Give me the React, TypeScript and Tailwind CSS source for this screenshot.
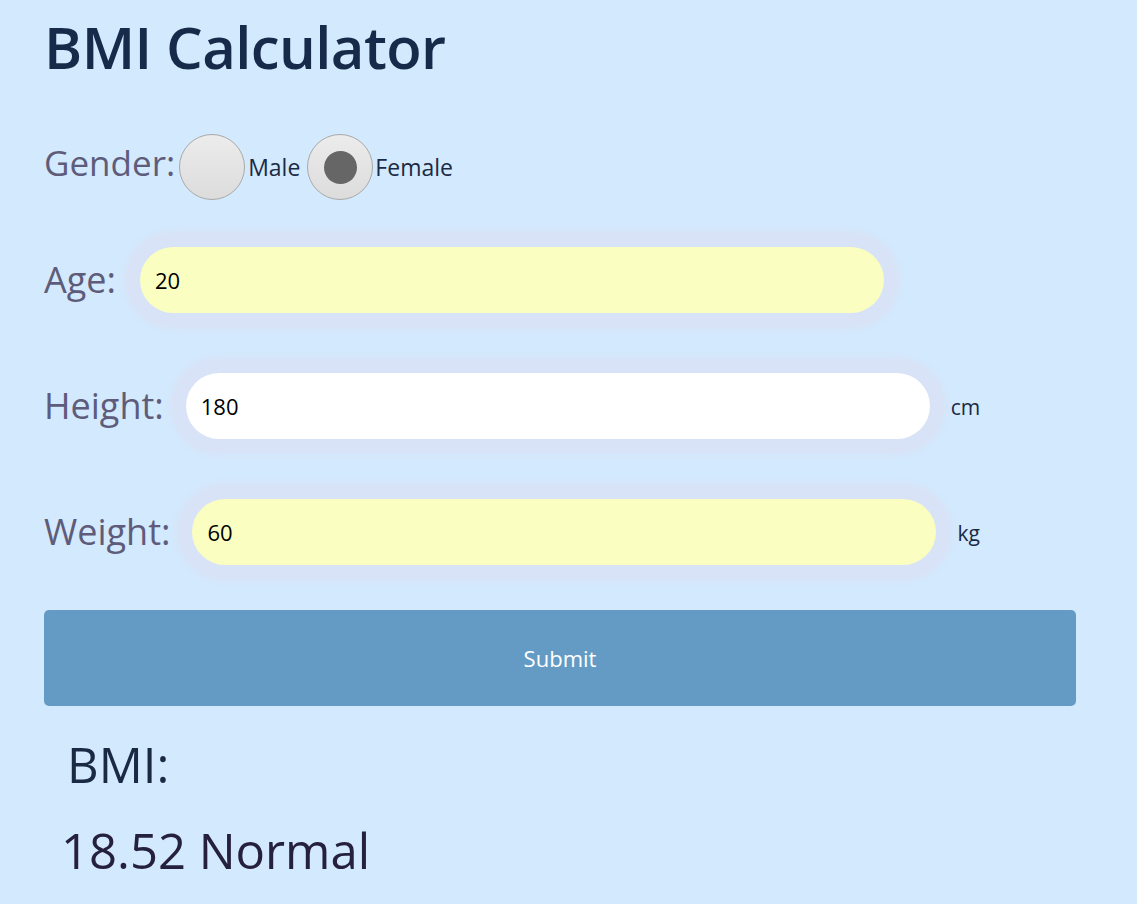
import React from "react";

const font = { fontFamily: '"Open Sans", "Noto Sans", sans-serif' };

function Field({ label, value, yellow, unit, gap }: { label: string; value: string; yellow?: boolean; unit?: string; gap: string }) {
  return (
    <div className="flex items-center h-[94px]">
      <span className={`text-[36px] leading-none text-[#5e5c7a] ${gap}`}>{label}</span>
      <div className="rounded-full p-[14px] bg-[#d8e3f7] shadow-[0_0_6px_2px_#d8e3f7]">
        <div className={`w-[744px] h-[66px] rounded-full flex items-center pl-[15px] text-[22px] text-black ${yellow ? "bg-[#fafec0]" : "bg-white"}`}>
          {value}
        </div>
      </div>
      {unit && <span className="ml-[7px] text-[21px] text-[#1b2a45] mt-[4px]">{unit}</span>}
    </div>
  );
}

function Radio({ checked }: { checked?: boolean }) {
  return (
    <span className="w-[66px] h-[66px] rounded-full border border-[#a9a9a9] bg-[linear-gradient(#ececec,#dcdcdc)] flex items-center justify-center shrink-0">
      {checked && <span className="w-[33px] h-[33px] rounded-full bg-[#666666]" />}
    </span>
  );
}

export default function App() {
  return (
    <div className="min-h-[904px] bg-[#d3e9fd] pl-[44px] pr-[61px]" style={font}>
      <h1 className="text-[58px] font-semibold leading-none text-[#172a4a] pt-[18px] h-[100px] tracking-[-0.6px]">BMI Calculator</h1>
      <div className="flex items-center h-[134px] mt-0">
        <span className="text-[35px] text-[#5e5c7a] leading-none mr-[4px] -mt-[10px]">Gender:</span>
        <Radio />
        <span className="ml-[3px] mr-[7px] text-[23px] text-[#1b2a45]">Male</span>
        <Radio checked />
        <span className="ml-[2px] text-[23px] text-[#1b2a45]">Female</span>
      </div>
      <div className="flex flex-col gap-[32px] -mt-[1px]">
        <Field label="Age:" value="20" yellow gap="mr-[10px]" />
        <Field label="Height:" value="180" unit="cm" gap="mr-[8px]" />
        <Field label="Weight:" value="60" yellow unit="kg" gap="mr-[8px]" />
      </div>
      <button className="mt-[31px] w-[1032px] h-[96px] rounded-[5px] bg-[#649bc4] text-white text-[22px]">Submit</button>
      <div className="pl-[23px] mt-[16px] text-[49px] leading-none text-[#1a2a45] h-[84px] flex items-center">BMI:</div>
      <div className="pl-[17px] text-[49px] leading-none text-[#26203f] mt-[12px] h-[64px] flex items-center">18.52 Normal</div>
    </div>
  );
}
